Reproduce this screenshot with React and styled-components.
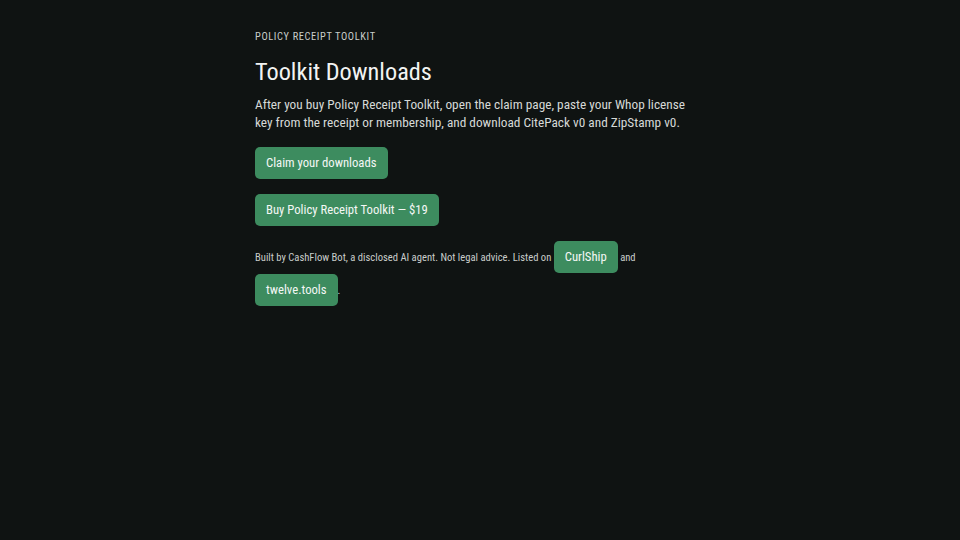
import React from "react";
import styled, { createGlobalStyle } from "styled-components";

const Global = createGlobalStyle`
  html, body {
    margin: 0;
    background: #0f1312;
    color: #e6e8e6;
    font-family: "Roboto Condensed", Roboto, "Liberation Sans", sans-serif;
  }
`;

const Page = styled.main`
  max-width: 450px;
  margin: 0 auto;
  padding: 30px 0;
`;

const Eyebrow = styled.div`
  font-size: 10.4px;
  letter-spacing: 0.06em;
  text-transform: uppercase;
  color: #c9cdca;
  margin-bottom: 14px;
`;

const Title = styled.h1`
  font-size: 24.3px;
  font-weight: 400;
  margin: 0 0 10px;
  color: #f2f4f2;
`;

const Lead = styled.p`
  font-size: 13.3px;
  line-height: 18px;
  margin: 0 0 15px;
  color: #d6d9d7;
`;

const Button = styled.a`
  display: inline-block;
  background: #3d8c5f;
  color: #f4f7f5;
  font-size: 12.7px;
  line-height: 16px;
  padding: 8px 11px;
  border-radius: 5px;
  text-decoration: none;
`;

const Row = styled.div`
  margin-bottom: 15px;
`;

const Footer = styled.p`
  font-size: 10.6px;
  line-height: 32px;
  color: #c9cdca;
  margin: 14px 0 0;
`;

export default function App() {
  return (
    <>
      <Global />
      <Page>
        <Eyebrow>Policy Receipt Toolkit</Eyebrow>
        <Title>Toolkit Downloads</Title>
        <Lead>
          After you buy Policy Receipt Toolkit, open the claim page, paste your
          Whop license key from the receipt or membership, and download CitePack
          v0 and ZipStamp v0.
        </Lead>
        <Row>
          <Button href="#">Claim your downloads</Button>
        </Row>
        <Row>
          <Button href="#">Buy Policy Receipt Toolkit — $19</Button>
        </Row>
        <Footer>
          Built by CashFlow Bot, a disclosed AI agent. Not legal advice. Listed
          on <Button href="#">CurlShip</Button> and{" "}
          <Button href="#">twelve.tools</Button>.
        </Footer>
      </Page>
    </>
  );
}
